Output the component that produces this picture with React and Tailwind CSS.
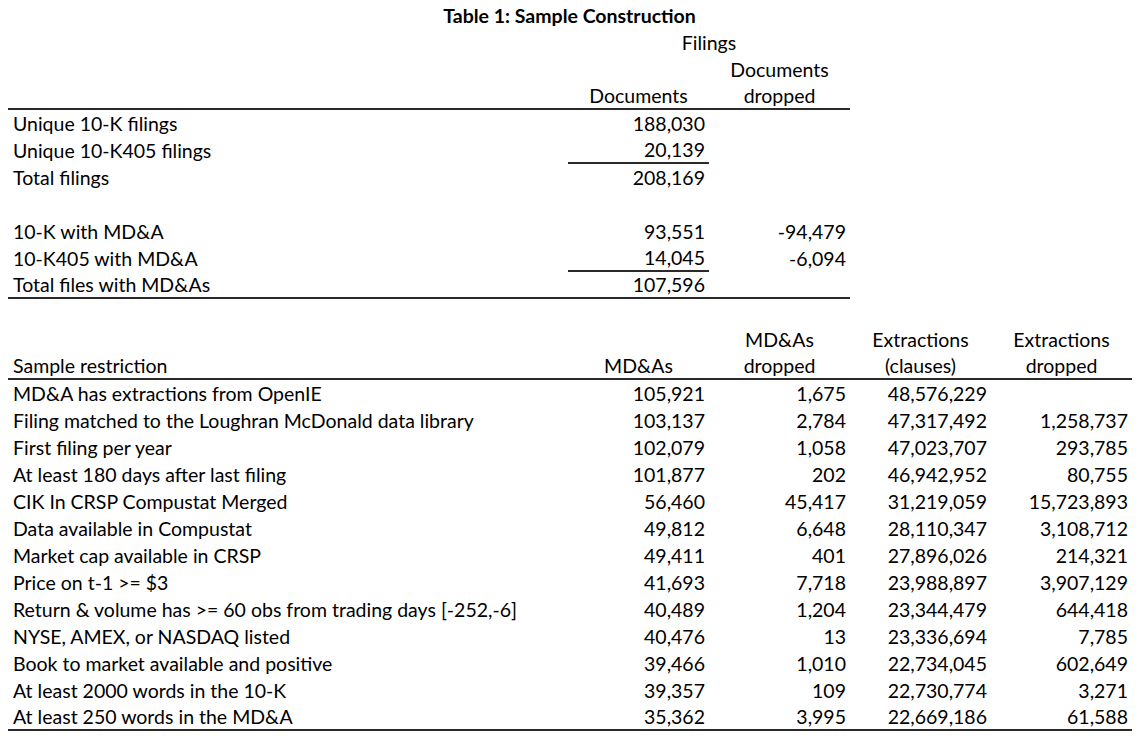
import clsx from "clsx";

const COLS = "grid grid-cols-[560px_141px_141px_141px_141px]";

const RESTRICTIONS = [
  ["MD&A has extractions from OpenIE", "105,921", "1,675", "48,576,229", ""],
  ["Filing matched to the Loughran McDonald data library", "103,137", "2,784", "47,317,492", "1,258,737"],
  ["First filing per year", "102,079", "1,058", "47,023,707", "293,785"],
  ["At least 180 days after last filing", "101,877", "202", "46,942,952", "80,755"],
  ["CIK In CRSP Compustat Merged", "56,460", "45,417", "31,219,059", "15,723,893"],
  ["Data available in Compustat", "49,812", "6,648", "28,110,347", "3,108,712"],
  ["Market cap available in CRSP", "49,411", "401", "27,896,026", "214,321"],
  ["Price on t-1 >= $3", "41,693", "7,718", "23,988,897", "3,907,129"],
  ["Return & volume has >= 60 obs from trading days [-252,-6]", "40,489", "1,204", "23,344,479", "644,418"],
  ["NYSE, AMEX, or NASDAQ listed", "40,476", "13", "23,336,694", "7,785"],
  ["Book to market available and positive", "39,466", "1,010", "22,734,045", "602,649"],
  ["At least 2000 words in the 10-K", "39,357", "109", "22,730,774", "3,271"],
  ["At least 250 words in the MD&A", "35,362", "3,995", "22,669,186", "61,588"],
];

// one spreadsheet row; lines = indexes of cells that get a bottom rule
function Row({ cells = [], lines = [], center = false }) {
  return (
    <div className={COLS}>
      {[0, 1, 2, 3, 4].map(i => (
        <div
          key={i}
          className={clsx(
            "h-[27px] flex items-center whitespace-nowrap",
            i === 0 ? "pl-[5px]" : center ? "justify-center" : "justify-end pr-[4px]",
            lines.includes(i) && "border-b-2 border-[#2a2a2a]"
          )}
        >
          {cells[i] || ""}
        </div>
      ))}
    </div>
  );
}

export default function App() {
  return (
    <div className="w-[1139px] h-[743px] bg-white text-black text-[19.5px] pt-[2px]" style={{ fontFamily: "Lato, 'Open Sans', sans-serif" }}>
      <div className="h-[27px] flex items-center justify-center font-bold">Table 1: Sample Construction</div>
      <div className="ml-[8px]">
        {/* Filings block */}
        <div className={COLS}>
          <div className="h-[27px]" />
          <div className="col-span-2 h-[27px] flex items-center justify-center">Filings</div>
        </div>
        <Row cells={["", "", "Documents"]} center />
        <Row cells={["", "Documents", "dropped"]} lines={[0, 1, 2]} center />
        <Row cells={["Unique 10-K filings", "188,030"]} />
        <Row cells={["Unique 10-K405 filings", "20,139"]} lines={[1]} />
        <Row cells={["Total filings", "208,169"]} />
        <Row />
        <Row cells={["10-K with MD&A", "93,551", "-94,479"]} />
        <Row cells={["10-K405 with MD&A", "14,045", "-6,094"]} lines={[1]} />
        <Row cells={["Total files with MD&As", "107,596"]} lines={[0, 1, 2]} />
        <Row />

        {/* Sample restrictions */}
        <Row cells={["", "", "MD&As", "Extractions", "Extractions"]} center />
        <Row cells={["Sample restriction", "MD&As", "dropped", "(clauses)", "dropped"]} lines={[0, 1, 2, 3, 4]} center />
        {RESTRICTIONS.map((r, idx) => (
          <Row key={r[0]} cells={r} lines={idx === RESTRICTIONS.length - 1 ? [0, 1, 2, 3, 4] : []} />
        ))}
      </div>
    </div>
  );
}
